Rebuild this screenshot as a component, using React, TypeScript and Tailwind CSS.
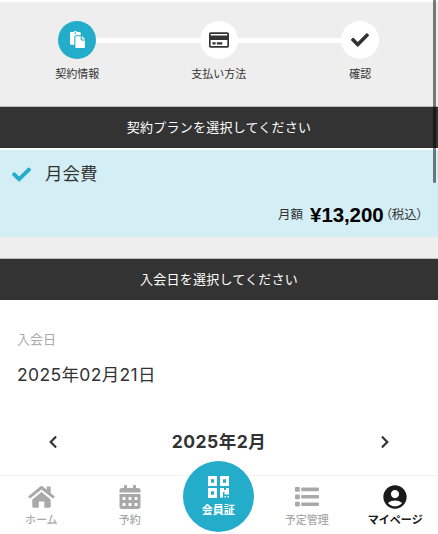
import type { ReactNode } from "react";
import {
  FaCalendarAlt,
  FaCheck,
  FaChevronLeft,
  FaChevronRight,
  FaPaste,
  FaRegCreditCard,
} from "react-icons/fa";
import { MdAccountCircle } from "react-icons/md";

const HomeIcon = () => (
  <svg className="h-[22px] w-[27px]" viewBox="0 0 27 22" fill="currentColor">
    <path d="M13.5 6 22.7 13.4V20.6Q22.7 21.7 21.6 21.7H16.3V15.4H10.8V21.7H5.4Q4.3 21.7 4.3 20.6V13.4Z" />
    <path d="M12.2.5Q13.5-.4 14.8.5L18.8 3.8V.5H22.7V7L26.5 10.2Q26.9 10.6 26.5 11L25.4 12.2Q25 12.6 24.6 12.2L13.5 3.4 2.4 12.2Q2 12.6 1.6 12.2L.5 11Q.1 10.6.5 10.2Z" />
  </svg>
);

const ListIcon = () => (
  <svg className="h-[20px] w-6" viewBox="0 0 24 20" fill="currentColor">
    <rect width="4.8" height="4.8" rx="1" />
    <rect y="7.4" width="4.8" height="4.8" rx="1" />
    <rect y="14.8" width="4.8" height="4.8" rx="1" />
    <rect x="6.2" y=".6" width="17.8" height="3.6" rx="1" />
    <rect x="6.2" y="8" width="17.8" height="3.6" rx="1" />
    <rect x="6.2" y="15.4" width="17.8" height="3.6" rx="1" />
  </svg>
);

const QrIcon = () => (
  <svg className="h-[22px] w-[21px]" viewBox="0 0 21 22" fill="currentColor" fillRule="evenodd">
    <path d="M0 0H9V10H0ZM3 3.3V6.7H6V3.3ZM12 0H21V10H12ZM15 3.3V6.7H18V3.3ZM0 12H9V22H0ZM3 15.3V18.7H6V15.3Z" />
    <path d="M12 12H16V14H18V12H21V18.5H16.5V16H15V21.5H12ZM16.5 20H18V21.5H16.5ZM19.5 20H21V21.5H19.5Z" />
  </svg>
);

const steps = [
  { label: "契約情報", icon: <FaPaste className="size-[17px]" />, active: true },
  { label: "支払い方法", icon: <FaRegCreditCard className="h-[18px] w-5" />, active: false },
  { label: "確認", icon: <FaCheck className="size-[18px]" />, active: false },
];

const SectionTitle = ({ children }: { children: ReactNode }) => (
  <h2 className="h-[42px] border-t border-[#bbb] bg-[#333] text-center text-[13px] leading-[41px] tracking-[0.25px] text-white">
    {children}
  </h2>
);

const NavItem = ({ icon, label, active = false }: { icon: ReactNode; label: string; active?: boolean }) => (
  <button
    className={`flex w-[88.5px] flex-col items-center text-[11px] leading-4 ${
      active ? "font-bold text-[#1a1a1a]" : "font-medium text-[#a9a9a9]"
    }`}
  >
    <span className="mt-1.5 flex h-[30px] items-center justify-center">{icon}</span>
    <span className="whitespace-nowrap">{label}</span>
  </button>
);

const App = () => {
  return (
    <div className="relative flex h-[534px] w-[438px] flex-col overflow-hidden bg-white font-['Liberation_Sans','Noto_Sans_CJK_JP',sans-serif] text-[#333]">
      {/* Steps */}
      <header className="mt-0.5 h-[104px] bg-[#eee] pt-[18.5px]">
        <ol className="relative mx-auto flex w-[425px]">
          <li className="absolute top-[17px] left-[71px] h-[5px] w-[283px] bg-white" />
          {steps.map((step) => (
            <li key={step.label} className="relative flex w-[141.5px] flex-col items-center">
              <span
                className={`flex size-[38px] items-center justify-center rounded-full ${
                  step.active ? "bg-[#24accb] text-white" : "bg-white"
                }`}
              >
                {step.icon}
              </span>
              <span className="mt-[7.5px] text-[11px] leading-4">{step.label}</span>
            </li>
          ))}
        </ol>
      </header>

      <SectionTitle>契約プランを選択してください</SectionTitle>

      {/* Selected plan */}
      <section className="mt-0.5 flex h-[87px] flex-col justify-between bg-[#d4eef5]">
        <div className="flex items-center pt-2.5 pl-3">
          <FaCheck className="size-[19px] text-[#24accb]" />
          <span className="ml-3.5 text-[17.5px] leading-7">月会費</span>
        </div>
        <p className="flex items-center justify-end pr-[15px] pb-2 text-[12.5px] leading-7">
          <span>月額</span>
          <span className="ml-[7px] text-[20.5px] font-bold tracking-[-0.1px] text-black">¥13,200</span>
          <span className="ml-0.5 [font-feature-settings:'palt']">（税込）</span>
        </p>
      </section>

      <div className="h-[21px] bg-[#eee]" />
      <SectionTitle>入会日を選択してください</SectionTitle>

      {/* Start date */}
      <main className="flex-1 px-[17px] pt-[30px]">
        <p className="text-[13px] leading-5 text-[#aaa]">入会日</p>
        <p className="mt-[11px] font-['Inter','Noto_Sans_CJK_JP',sans-serif] text-[17.5px] leading-7 tracking-[0.35px]">
          2025年02月21日
        </p>
        <div className="mt-[39px] flex items-center justify-between px-[29px]">
          <button>
            <FaChevronLeft className="size-3.5" />
          </button>
          <span className="font-['Inter','Noto_Sans_CJK_JP',sans-serif] text-[17.5px] leading-7 font-bold tracking-[0.5px]">
            2025年2月
          </span>
          <button>
            <FaChevronRight className="size-3.5" />
          </button>
        </div>
      </main>

      {/* Bottom navigation */}
      <nav className="flex h-[59px] shrink-0 border-t border-[#f3f3f3]">
        <div className="-ml-[3px] flex">
          <NavItem icon={<HomeIcon />} label="ホーム" />
          <NavItem icon={<FaCalendarAlt className="size-6" />} label="予約" />
          <div className="flex w-[88.5px] justify-center">
            <button className="relative -mt-[15px] flex size-[71px] shrink-0 flex-col items-center rounded-full bg-[#24accb] pt-[15px] text-[11px] leading-4 font-bold text-white">
              <QrIcon />
              <span className="mt-1">会員証</span>
            </button>
          </div>
          <NavItem icon={<ListIcon />} label="予定管理" />
          <NavItem icon={<MdAccountCircle className="size-7" />} label="マイページ" active />
        </div>
      </nav>

      {/* Scroll indicator */}
      <div className="absolute top-0 right-0.5 h-[183px] w-[3px] rounded-b-full bg-black/50" />
    </div>
  );
};

export default App;
